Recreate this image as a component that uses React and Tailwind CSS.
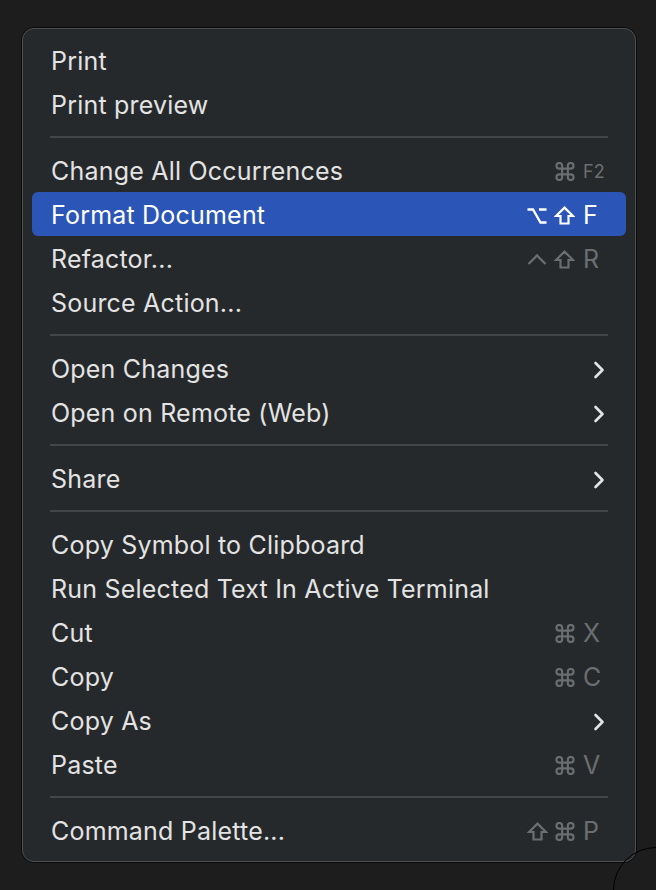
import React from "react";

const Cmd = ({ c }) => (
  <svg width="20" height="19" viewBox="2 2 20 20" fill="none" stroke={c} strokeWidth="2.2" strokeLinecap="round" strokeLinejoin="round">
    <path d="M15 6v12a3 3 0 1 0 3-3H6a3 3 0 1 0 3 3V6a3 3 0 1 0-3 3h12a3 3 0 1 0-3-3" />
  </svg>
);
const Shift = ({ c }) => (
  <svg width="21" height="19" viewBox="0 0 21 19" fill="none" stroke={c} strokeWidth="2.2" strokeLinejoin="miter">
    <path d="M10.5 1.6 L19 10 H14.5 V17.5 H6.5 V10 H2 Z" />
  </svg>
);
const Opt = ({ c }) => (
  <svg width="20" height="18" viewBox="0 0 20 18" fill="none" stroke={c} strokeWidth="2.3">
    <path d="M0.5 2.5 H6 L13.5 15.5 H19.5 M12 2.5 H19.5" />
  </svg>
);
const Ctrl = ({ c }) => (
  <svg width="20" height="18" viewBox="0 0 20 18" fill="none" stroke={c} strokeWidth="2.3">
    <path d="M1.5 13 L10 4.5 L18.5 13" />
  </svg>
);
const Chevron = () => (
  <svg width="12" height="18" viewBox="0 0 12 18" fill="none" stroke="#e4e4e4" strokeWidth="2.6" strokeLinecap="round" strokeLinejoin="round">
    <path d="M2.5 2 L9.5 9 L2.5 16" />
  </svg>
);

const mods = { cmd: Cmd, shift: Shift, opt: Opt, ctrl: Ctrl };

function Row({ label, mod = [], keyLabel, small, sub, active }) {
  const c = active ? "#ffffff" : "#6b6e70";
  return (
    <div
      className={
        "flex h-[44px] items-center rounded-[6px] pt-[3px] pl-[19px] pr-[21px] " +
        (active ? "bg-[#2b56b8] text-white" : "text-[#e3e3e3]")
      }
    >
      <span className="flex-1 whitespace-nowrap tracking-[0.2px]">{label}</span>
      {keyLabel && (
        <div className="flex items-center">
          <div className="flex items-center gap-[7px]">
            {mod.map((m, i) => {
              const M = mods[m];
              return <M key={i} c={c} />;
            })}
          </div>
          <span
            className={
              "ml-[8px] w-[22px] whitespace-nowrap leading-none " +
              (small ? "text-[18px] " : "") +
              (active ? "text-white" : "text-[#6b6e70]")
            }
          >
            {keyLabel}
          </span>
        </div>
      )}
      {sub && <Chevron />}
    </div>
  );
}

const Sep = () => (
  <div className="flex h-[22px] items-center px-[18px]">
    <div className="h-[2px] w-full bg-[#434648]" />
  </div>
);

export default function App() {
  return (
    <div className="relative h-[890px] w-[656px] overflow-hidden bg-[#1d1d1d] pt-[27px] pl-[21px] font-['Inter','Liberation_Sans',sans-serif] text-[25px]">
      <div className="w-[616px] rounded-[13px] border border-[#0b0b0b]">
        <div className="rounded-[12px] border border-[#4d5052] bg-[#26292b] px-[9px] py-[9px]">
          <Row label="Print" />
          <Row label="Print preview" />
          <Sep />
          <Row label="Change All Occurrences" mod={["cmd"]} keyLabel="F2" small />
          <Row label="Format Document" mod={["opt", "shift"]} keyLabel="F" active />
          <Row label="Refactor..." mod={["ctrl", "shift"]} keyLabel="R" />
          <Row label="Source Action..." />
          <Sep />
          <Row label="Open Changes" sub />
          <Row label="Open on Remote (Web)" sub />
          <Sep />
          <Row label="Share" sub />
          <Sep />
          <Row label="Copy Symbol to Clipboard" />
          <Row label="Run Selected Text In Active Terminal" />
          <Row label="Cut" mod={["cmd"]} keyLabel="X" />
          <Row label="Copy" mod={["cmd"]} keyLabel="C" />
          <Row label="Copy As" sub />
          <Row label="Paste" mod={["cmd"]} keyLabel="V" />
          <Sep />
          <Row label="Command Palette..." mod={["shift", "cmd"]} keyLabel="P" />
        </div>
      </div>
      <div className="absolute left-[613px] top-[847px] h-[86px] w-[86px] rounded-full border-[1.5px] border-black" />
    </div>
  );
}
